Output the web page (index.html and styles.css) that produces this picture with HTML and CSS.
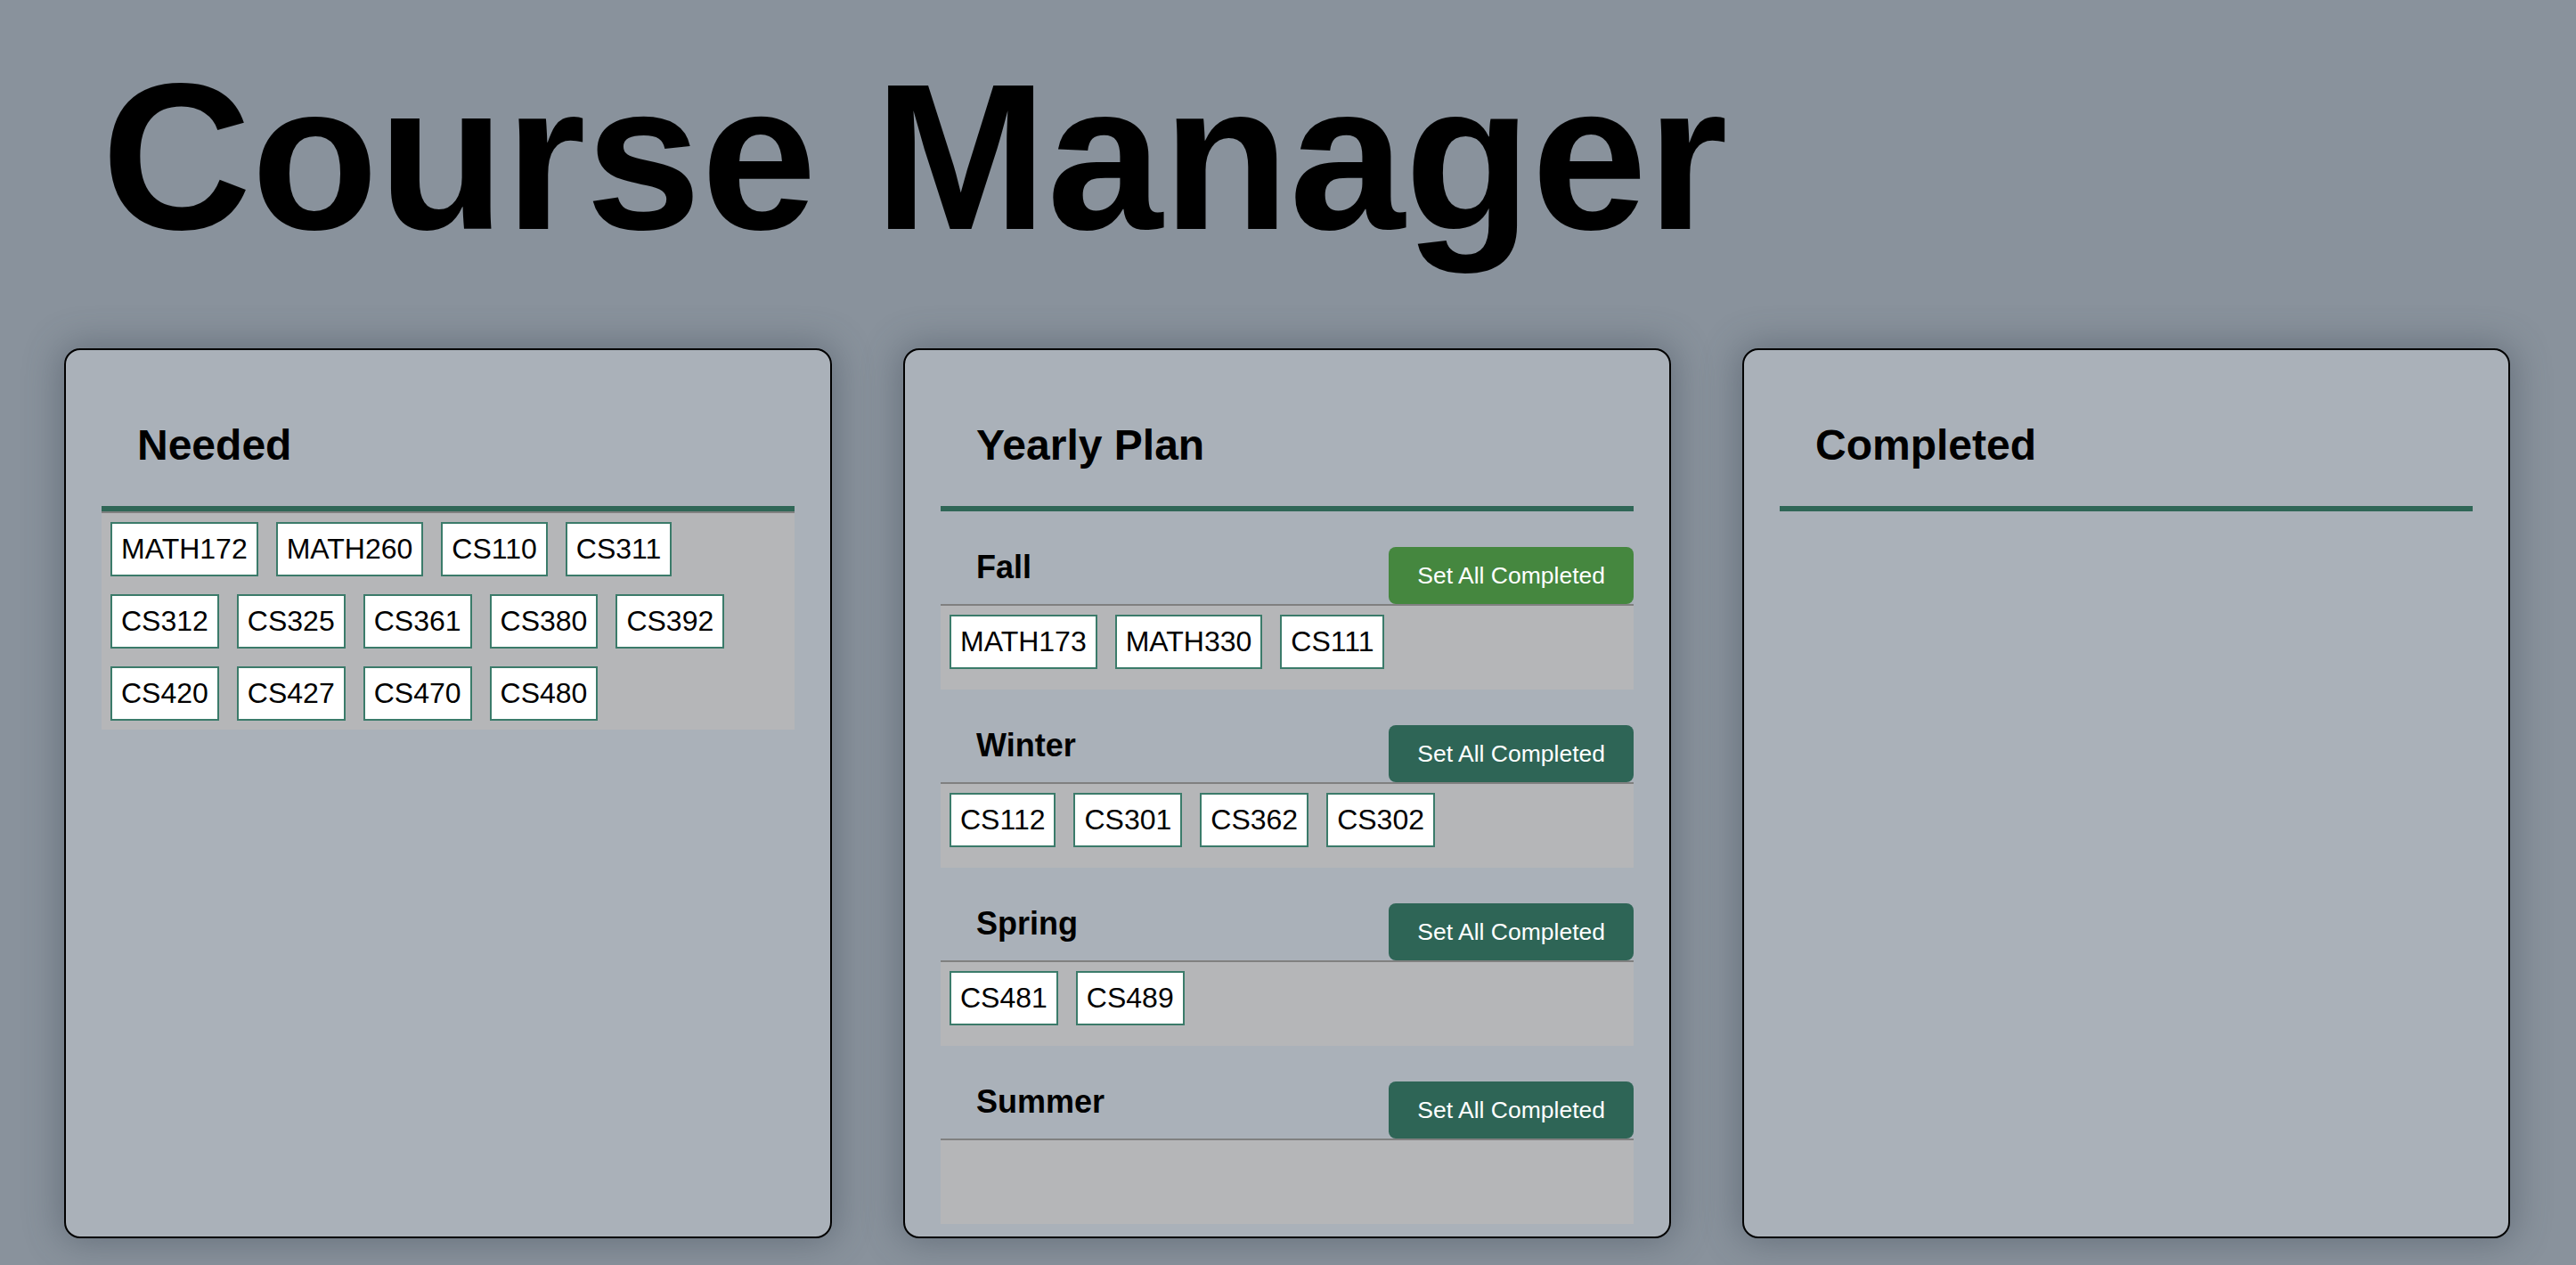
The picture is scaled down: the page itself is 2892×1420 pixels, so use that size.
FILE: index.html
```html
<!DOCTYPE html>
<html lang="en">
<head>
<meta charset="utf-8">
<title>Course Manager</title>
<link rel="stylesheet" href="styles.css">
</head>
<body>
<h1 class="title">Course Manager</h1>
<div class="columns">
  <section class="panel">
    <div class="panel-header"><h2 class="panel-title">Needed</h2></div>
    <div class="course-list">
      <span class="course">MATH172</span>
      <span class="course">MATH260</span>
      <span class="course">CS110</span>
      <span class="course">CS311</span>
      <span class="course">CS312</span>
      <span class="course">CS325</span>
      <span class="course">CS361</span>
      <span class="course">CS380</span>
      <span class="course">CS392</span>
      <span class="course">CS420</span>
      <span class="course">CS427</span>
      <span class="course">CS470</span>
      <span class="course">CS480</span>
    </div>
  </section>
  <section class="panel">
    <div class="panel-header"><h2 class="panel-title">Yearly Plan</h2></div>
    <div class="term">
      <div class="term-header">
        <h3 class="term-title">Fall</h3>
        <button class="btn btn-active">Set All Completed</button>
      </div>
      <div class="term-courses">
        <span class="course">MATH173</span>
        <span class="course">MATH330</span>
        <span class="course">CS111</span>
      </div>
    </div>
    <div class="term">
      <div class="term-header">
        <h3 class="term-title">Winter</h3>
        <button class="btn">Set All Completed</button>
      </div>
      <div class="term-courses">
        <span class="course">CS112</span>
        <span class="course">CS301</span>
        <span class="course">CS362</span>
        <span class="course">CS302</span>
      </div>
    </div>
    <div class="term">
      <div class="term-header">
        <h3 class="term-title">Spring</h3>
        <button class="btn">Set All Completed</button>
      </div>
      <div class="term-courses">
        <span class="course">CS481</span>
        <span class="course">CS489</span>
      </div>
    </div>
    <div class="term">
      <div class="term-header">
        <h3 class="term-title">Summer</h3>
        <button class="btn">Set All Completed</button>
      </div>
      <div class="term-courses"></div>
    </div>
  </section>
  <section class="panel">
    <div class="panel-header"><h2 class="panel-title">Completed</h2></div>
  </section>
</div>
</body>
</html>
```
FILE: styles.css
```css
html, body {
  margin: 0;
  padding: 0;
}
body {
  background: #89929c;
  font-family: "Liberation Sans", Arial, Helvetica, sans-serif;
  color: #000;
  min-height: 100vh;
  overflow: hidden;
}
.title {
  margin: 0;
  padding: 60px 0 0 114px;
  font-size: 233px;
  line-height: 232px;
  font-weight: bold;
}
.columns {
  display: flex;
  gap: 80px;
  padding: 99px 74px 0 72px;
}
.panel {
  flex: 1 1 0;
  height: 999px;
  box-sizing: border-box;
  border: 2px solid #000;
  border-radius: 18px;
  background: #aab1b9;
  box-shadow: 0 0 40px 4px rgba(60, 70, 85, 0.45);
  overflow: hidden;
}
.panel-header {
  margin: 0 40px;
  padding: 83px 40px 44px;
  border-bottom: 6px solid #2f6656;
}
.panel-title {
  margin: 0;
  font-size: 48px;
  line-height: 48px;
  font-weight: bold;
}
.course-list {
  margin: 0 40px;
  border-top: 2px solid #808080;
  background: #b5b6b8;
  display: flex;
  flex-wrap: wrap;
  align-content: flex-start;
}
.course {
  display: block;
  margin: 10px;
  padding: 10px 10px;
  border: 2px solid #3b7b6a;
  background: #fff;
  font-size: 32px;
  line-height: normal;
  color: #000;
}
.term {
  margin: 40px 40px 0;
}
.term-header {
  display: flex;
  justify-content: space-between;
  align-items: flex-start;
  padding-left: 40px;
}
.term-title {
  margin: 5px 0 0;
  font-size: 36px;
  line-height: 36px;
  font-weight: bold;
}
.btn {
  height: 64px;
  padding: 0 32px;
  border: 0;
  border-radius: 8px;
  background: #2e6556;
  color: #fff;
  font-family: "Liberation Sans", Arial, Helvetica, sans-serif;
  font-size: 26.5px;
  cursor: pointer;
}
.btn-active {
  background: #45873f;
}
.term-courses {
  border-top: 2px solid #808080;
  background: #b5b6b8;
  min-height: 94px;
  display: flex;
  flex-wrap: wrap;
  align-content: flex-start;
}
```
